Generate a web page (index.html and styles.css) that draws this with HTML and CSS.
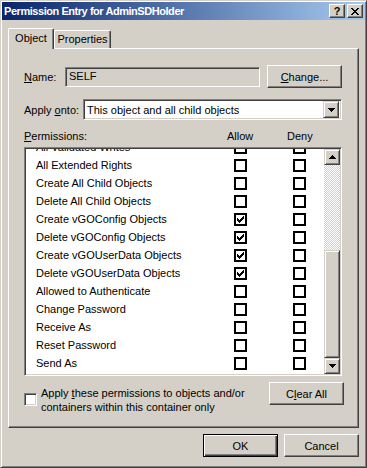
FILE: index.html
```html
<!DOCTYPE html>
<html lang="en">
  <head>
    <meta charset="UTF-8" />
    <link rel="stylesheet" href="styles.css">
    <title>Permission Entry for AdminSDHolder</title>
  </head>
  <body>
    <div class="window">
      <div class="titlebar">
        <span class="title">Permission Entry for AdminSDHolder</span>
        <div class="caption-btns">
          <div class="cap cap-help">?</div>
          <div class="cap">
            <svg width="8" height="7" viewBox="0 0 8 7" shape-rendering="crispEdges">
              <path d="M0 0h2v1h-2zM6 0h2v1h-2zM1 1h2v1h-2zM5 1h2v1h-2zM2 2h4v1h-4zM3 3h2v1h-2zM2 4h4v1h-4zM1 5h2v1h-2zM5 5h2v1h-2zM0 6h2v1h-2zM6 6h2v1h-2z" fill="#000"/>
            </svg>
          </div>
        </div>
      </div>

      <div class="content">
        <div class="tabs">
          <div class="tab active">Object</div>
          <div class="tab">Properties</div>
        </div>

        <div class="panel">
          <div class="name-row">
            <span class="lbl"><u>N</u>ame:</span>
            <div class="field">SELF</div>
            <div class="btn"><u>C</u>hange...</div>
          </div>

          <div class="apply-row">
            <span class="lbl">Apply <u>o</u>nto:</span>
            <div class="combo">
              <span class="combo-text">This object and all child objects</span>
              <div class="drop">
                <svg width="7" height="4" viewBox="0 0 7 4" shape-rendering="crispEdges"><path d="M0 0h7v1h-7zM1 1h5v1h-5zM2 2h3v1h-3zM3 3h1v1h-1z" fill="#000"/></svg>
              </div>
            </div>
          </div>

          <div class="perm-head">
            <span><u>P</u>ermissions:</span>
            <span>Allow</span>
            <span>Deny</span>
          </div>

          <div class="list">
            <div class="items">
              <div class="item"><span>All Validated Writes</span><i class="cb"></i><i class="cb"></i></div>
              <div class="item"><span>All Extended Rights</span><i class="cb"></i><i class="cb"></i></div>
              <div class="item"><span>Create All Child Objects</span><i class="cb"></i><i class="cb"></i></div>
              <div class="item"><span>Delete All Child Objects</span><i class="cb"></i><i class="cb"></i></div>
              <div class="item"><span>Create vGOConfig Objects</span><i class="cb checked"></i><i class="cb"></i></div>
              <div class="item"><span>Delete vGOConfig Objects</span><i class="cb checked"></i><i class="cb"></i></div>
              <div class="item"><span>Create vGOUserData Objects</span><i class="cb checked"></i><i class="cb"></i></div>
              <div class="item"><span>Delete vGOUserData Objects</span><i class="cb checked"></i><i class="cb"></i></div>
              <div class="item"><span>Allowed to Authenticate</span><i class="cb"></i><i class="cb"></i></div>
              <div class="item"><span>Change Password</span><i class="cb"></i><i class="cb"></i></div>
              <div class="item"><span>Receive As</span><i class="cb"></i><i class="cb"></i></div>
              <div class="item"><span>Reset Password</span><i class="cb"></i><i class="cb"></i></div>
              <div class="item"><span>Send As</span><i class="cb"></i><i class="cb"></i></div>
            </div>
            <div class="scrollbar">
              <div class="sb-btn">
                <svg width="7" height="4" viewBox="0 0 7 4" shape-rendering="crispEdges"><path d="M3 0h1v1h-1zM2 1h3v1h-3zM1 2h5v1h-5zM0 3h7v1h-7z" fill="#000"/></svg>
              </div>
              <div class="sb-track"></div>
              <div class="sb-thumb"></div>
              <div class="sb-btn">
                <svg width="7" height="4" viewBox="0 0 7 4" shape-rendering="crispEdges"><path d="M0 0h7v1h-7zM1 1h5v1h-5zM2 2h3v1h-3zM3 3h1v1h-1z" fill="#000"/></svg>
              </div>
            </div>
          </div>

          <div class="bottom-row">
            <i class="cb3d"></i>
            <span class="apply-text">Apply <u>t</u>hese permissions to objects and/or<br>containers within this container only</span>
            <div class="btn">C<u>l</u>ear All</div>
          </div>
        </div>

        <div class="footer">
          <div class="btn default">OK</div>
          <div class="btn">Cancel</div>
        </div>
      </div>
    </div>
  </body>
</html>
```

FILE: styles.css
```css
/* Classic dialog */

body {
  margin: 0;
  background: #d4d0c8;
  font-family: "Liberation Sans", Arial, sans-serif;
  font-size: 11px;
  color: #000;
}
u {
  text-decoration: underline;
}
.window {
  box-sizing: border-box;
  width: 367px;
  height: 468px;
  padding: 1px;
  background: #d4d0c8;
  border: 1px solid;
  border-color: #d4d0c8 #404040 #404040 #d4d0c8;
  box-shadow: inset 1px 1px #fff, inset -1px -1px #808080;
}

/* Title bar */
.titlebar {
  display: flex;
  align-items: center;
  height: 18px;
  padding-left: 2px;
  background: linear-gradient(to right, #0a246a, #a6caf0);
}
.title {
  flex: 1;
  color: #fff;
  font-weight: 700;
  font-size: 11px;
  letter-spacing: -0.45px;
}
.caption-btns {
  display: flex;
  gap: 2px;
  margin-right: 2px;
}
.cap {
  box-sizing: border-box;
  width: 16px;
  height: 14px;
  display: flex;
  align-items: center;
  justify-content: center;
  background: #d4d0c8;
  border: 1px solid;
  border-color: #fff #404040 #404040 #fff;
  box-shadow: inset -1px -1px #808080;
}
.cap-help {
  font-weight: 700;
  font-size: 11px;
  line-height: 12px;
}

/* Body */
.content {
  padding: 8px 6px 0;
}
.tabs {
  display: flex;
  align-items: flex-end;
  height: 20px;
}
.tab {
  box-sizing: border-box;
  height: 18px;
  padding-top: 2px;
  text-align: center;
  border-top: 1px solid #fff;
  border-left: 1px solid #fff;
  border-right: 1px solid #404040;
  border-radius: 2px 2px 0 0;
  box-shadow: inset -1px 0 #808080;
}
.tab:first-child {
  width: 46px;
}
.tab:last-child {
  width: 57px;
}
.tab.active {
  position: relative;
  z-index: 1;
  height: 21px;
  margin-bottom: -1px;
  padding-top: 3px;
  background: #d4d0c8;
}

.panel {
  box-sizing: border-box;
  height: 380px;
  padding: 16px 14px 0 15px;
  border: 1px solid;
  border-color: #fff #404040 #404040 #fff;
  box-shadow: inset -1px -1px #808080;
}
.lbl {
  flex-shrink: 0;
}
.name-row {
  display: flex;
  align-items: center;
  height: 23px;
}
.name-row .lbl {
  width: 41px;
}
.field {
  box-sizing: border-box;
  width: 195px;
  height: 20px;
  padding-left: 3px;
  line-height: 16px;
  border: 1px solid;
  border-color: #808080 #fff #fff #808080;
  box-shadow: inset 1px 1px #404040, inset -1px -1px #d4d0c8;
}
.btn {
  box-sizing: border-box;
  width: 75px;
  height: 23px;
  margin-left: 7px;
  display: flex;
  align-items: center;
  justify-content: center;
  background: #d4d0c8;
  border: 1px solid;
  border-color: #fff #404040 #404040 #fff;
  box-shadow: inset -1px -1px #808080;
}
.btn.default {
  border: 1px solid #000;
  box-shadow: inset 1px 1px #fff, inset -1px -1px #404040, inset -2px -2px #808080;
}

.apply-row {
  display: flex;
  align-items: center;
  margin-top: 11px;
}
.apply-row .lbl {
  width: 59px;
}
.combo {
  box-sizing: border-box;
  display: flex;
  align-items: center;
  width: 259px;
  height: 21px;
  padding: 2px;
  background: #fff;
  border: 1px solid;
  border-color: #808080 #fff #fff #808080;
  box-shadow: inset 1px 1px #404040, inset -1px -1px #d4d0c8;
}
.combo-text {
  flex: 1;
  padding-left: 1px;
}
.drop,
.sb-btn {
  box-sizing: border-box;
  width: 16px;
  height: 17px;
  display: flex;
  align-items: center;
  justify-content: center;
  background: #d4d0c8;
  border: 1px solid;
  border-color: #d4d0c8 #404040 #404040 #d4d0c8;
  box-shadow: inset 1px 1px #fff, inset -1px -1px #808080;
}

/* Permissions list */
.perm-head {
  display: grid;
  grid-template-columns: 203px 60px auto;
  margin-top: 10px;
  line-height: 13px;
}
.list {
  box-sizing: border-box;
  display: flex;
  width: 318px;
  height: 229px;
  margin-top: 4px;
  background: #fff;
  border: 1px solid;
  border-color: #808080 #fff #fff #808080;
  box-shadow: inset 1px 1px #404040, inset -1px -1px #d4d0c8;
  padding: 1px;
}
.items {
  flex: 1;
  overflow: hidden;
}
.item {
  display: grid;
  grid-template-columns: 198px 59px 13px;
  align-items: center;
  height: 18px;
  padding-left: 10px;
}
.item:first-child {
  margin-top: -11px;
}
.cb {
  box-sizing: border-box;
  display: block;
  width: 13px;
  height: 13px;
  border: 2px solid #000;
  background: #fff;
}
.cb.checked {
  background: #fff url("data:image/svg+xml,%3Csvg xmlns='http://www.w3.org/2000/svg' width='9' height='9' viewBox='0 0 9 9' shape-rendering='crispEdges'%3E%3Cpath d='M7 1h1v1h-1zM6 2h2v1h-2zM1 3h1v1h-1zM5 3h3v1h-3zM1 4h2v1h-2zM4 4h3v1h-3zM1 5h5v1h-5zM2 6h3v1h-3zM3 7h1v1h-1z' fill='%23000'/%3E%3C/svg%3E") no-repeat 0 0;
}

.scrollbar {
  display: flex;
  flex-direction: column;
  width: 16px;
}
.sb-btn {
  height: 16px;
}
.sb-track {
  flex: 1;
  background: repeating-conic-gradient(#fff 0 25%, #d4d0c8 0 50%) 0 0 / 2px 2px;
}
.sb-thumb {
  box-sizing: border-box;
  height: 108px;
  background: #d4d0c8;
  border: 1px solid;
  border-color: #d4d0c8 #404040 #404040 #d4d0c8;
  box-shadow: inset 1px 1px #fff, inset -1px -1px #808080;
}

/* Bottom */
.bottom-row {
  display: flex;
  align-items: flex-start;
  margin-top: 6px;
}
.cb3d {
  box-sizing: border-box;
  display: block;
  flex-shrink: 0;
  width: 13px;
  height: 13px;
  margin-top: 11px;
  background: #fff;
  border: 1px solid;
  border-color: #808080 #fff #fff #808080;
  box-shadow: inset 1px 1px #404040, inset -1px -1px #d4d0c8;
}
.apply-text {
  flex: 1;
  margin: 4px 0 0 4px;
  line-height: 14px;
}

.footer {
  display: flex;
  justify-content: flex-end;
  margin-top: 6px;
}
.footer .btn {
  margin-left: 6px;
}
```
